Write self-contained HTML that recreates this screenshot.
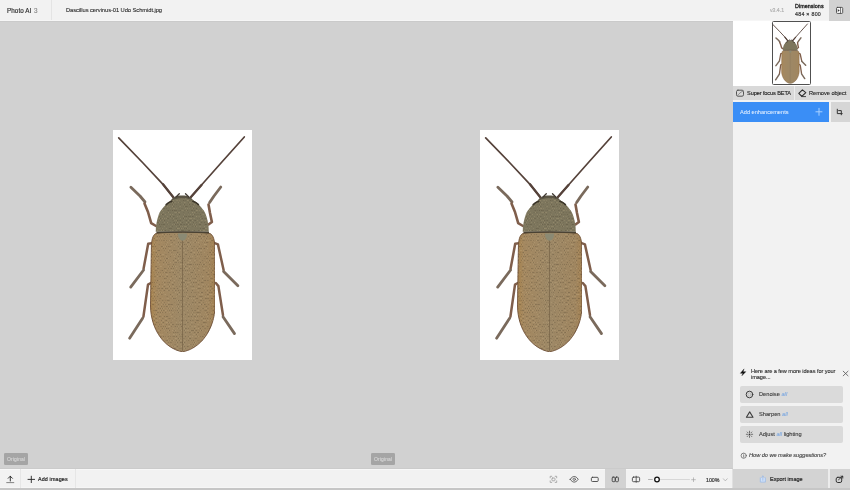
<!DOCTYPE html>
<html><head><meta charset="utf-8">
<style>
*{margin:0;padding:0;box-sizing:border-box}
html,body{width:850px;height:490px;overflow:hidden;background:#d1d1d1;font-family:"Liberation Sans",sans-serif;color:#222}
.abs{position:absolute}
.t{position:absolute;white-space:nowrap;line-height:1;will-change:transform}
.img{position:absolute;background:#fff;overflow:hidden}
</style></head><body>
<svg width="0" height="0" style="position:absolute"><defs>
<filter id="nof"><feOffset dx="0" dy="0"/></filter>
<filter id="spk" x="0" y="0" width="100%" height="100%" color-interpolation-filters="sRGB">
 <feTurbulence type="fractalNoise" baseFrequency="1.0 0.5" numOctaves="2" seed="7" result="n"/>
 <feColorMatrix in="n" type="matrix" values="0 0 0 0 0.28  0 0 0 0 0.24  0 0 0 0 0.17  1.6 0 0 0 -0.85" result="dark"/>
 <feColorMatrix in="n" type="matrix" values="0 0 0 0 0.80  0 0 0 0 0.72  0 0 0 0 0.56  -1.6 0 0 0 0.7" result="light"/>
 <feComposite in="dark" in2="SourceGraphic" operator="in" result="d2"/>
 <feComposite in="light" in2="SourceGraphic" operator="in" result="l2"/>
 <feMerge><feMergeNode in="SourceGraphic"/><feMergeNode in="d2"/><feMergeNode in="l2"/></feMerge>
</filter>
<linearGradient id="ely" x1="0" y1="0" x2="1" y2="0">
 <stop offset="0" stop-color="#a8844f"/>
 <stop offset="0.1" stop-color="#a48860"/>
 <stop offset="0.5" stop-color="#9d8866"/>
 <stop offset="0.9" stop-color="#a08660"/>
 <stop offset="1" stop-color="#a38152"/>
</linearGradient>
<g id="beetle">
 <g fill="none" stroke-linecap="round" stroke-linejoin="round">
  <path d="M5.7 7.9 L30 33 L50 54.3 L60.5 67.5" stroke="#55423a" stroke-width="1.70"/>
  <path d="M50 54.3 L60.5 67.5" stroke="#55423a" stroke-width="2.30"/>
  <path d="M131.3 7 L108 33 L88.5 55 L77.5 67.5" stroke="#55423a" stroke-width="1.70"/>
  <path d="M88.5 55 L77.5 67.5" stroke="#55423a" stroke-width="2.30"/>
  <path d="M17.9 57.3 L27 66 L32 72" stroke="#7a6a5c" stroke-width="2.80"/>
  <path d="M31.5 73.5 L35 82 L38.2 93.2 L43 96" stroke="#7f5e4b" stroke-width="2.60"/>
  <path d="M107.8 57 L101 66 L96.6 72.5" stroke="#7a6a5c" stroke-width="2.80"/>
  <path d="M95.5 74.5 L97 83 L98.9 92 L95.5 94.5" stroke="#7f5e4b" stroke-width="2.60"/>
  <path d="M40.6 112.9 L35.2 113.8 L30.6 138.6" stroke="#7f5e4b" stroke-width="2.50"/>
  <path d="M30.6 140 L17.7 157.1" stroke="#7a6a5c" stroke-width="2.80"/>
  <path d="M99.1 112.1 L104.9 114.3 L110.6 140" stroke="#7f5e4b" stroke-width="2.50"/>
  <path d="M110.6 141.4 L124.9 155.7" stroke="#7a6a5c" stroke-width="2.80"/>
  <path d="M37.8 153 L35 154.6 L30.4 186.8" stroke="#7f5e4b" stroke-width="2.50"/>
  <path d="M29.6 188.3 L16.6 208.2" stroke="#7a6a5c" stroke-width="2.80"/>
  <path d="M102.8 153 L105.4 156.1 L110 185.2" stroke="#7f5e4b" stroke-width="2.50"/>
  <path d="M110 186.8 L121.5 203.6" stroke="#7a6a5c" stroke-width="2.80"/>
 </g>
 <path d="M57 72 C59 67 63 65.5 69 65.5 C75 65.5 79 67 81 72 Z" fill="#5a5444"/>
 <path d="M63 67 L66.3 63.8 M75.8 67 L72.5 63.8" stroke="#3f3830" stroke-width="1.30" stroke-linecap="round" fill="none"/>
 <path d="M42.70 101.80 C42.82 100.45 42.85 96.67 43.40 93.70 C43.95 90.73 44.87 86.68 46.00 84.00 C47.13 81.32 48.82 79.40 50.20 77.60 C51.58 75.80 52.92 74.42 54.30 73.20 C55.68 71.98 56.97 71.05 58.50 70.30 C60.03 69.55 61.70 69.05 63.50 68.70 C65.30 68.35 67.37 68.20 69.30 68.20 C71.23 68.20 73.30 68.35 75.10 68.70 C76.90 69.05 78.57 69.55 80.10 70.30 C81.63 71.05 82.92 71.98 84.30 73.20 C85.68 74.42 87.02 75.80 88.40 77.60 C89.78 79.40 91.47 81.32 92.60 84.00 C93.73 86.68 94.67 90.73 95.20 93.70 C95.73 96.67 95.70 100.45 95.80 101.80 Z" fill="#7d765d" filter="url(#spk)"/>
 
 <path d="M69.5 102 C58 102 46 102.1 42.6 103.6 C39.6 105.5 38.6 110 38.4 117 L37.5 176 C37.8 199 51 218.5 69.5 221.8 C88 218.5 101.7 199 102 176 L101.8 117 C101.6 110 100.4 105.5 97.2 103.6 C93 102.1 81 102 69.5 102 Z" fill="url(#ely)" stroke="#6e4e34" stroke-width="0.9" filter="url(#spk)"/>
 <path d="M43.5 102.6 C55 101.8 84 101.8 96 102.6" stroke="#4a4233" stroke-width="1.6" fill="none"/>
 <path d="M53.2 74.6 C54.7 73 56.2 72 58.7 71.2 M79.9 71.2 C82.4 72 83.9 73 85.4 74.6" stroke="#3a3428" stroke-width="1.60" fill="none" stroke-linecap="round"/>
 <path d="M69.5 104 L69.5 221" stroke="#6f5a40" stroke-width="0.6"/>
 <path d="M65 103.5 C65 108.5 67.5 110.7 69.5 110.7 C71.5 110.7 74 108.5 74 103.5 Z" fill="#8b8a74"/>
</g>
<g id="beetleT">
 <g fill="none" stroke-linecap="round" stroke-linejoin="round">
  <path d="M5.7 7.9 L30 33 L50 54.3 L60.5 67.5" stroke="#55423a" stroke-width="3.23"/>
  <path d="M50 54.3 L60.5 67.5" stroke="#55423a" stroke-width="4.37"/>
  <path d="M131.3 7 L108 33 L88.5 55 L77.5 67.5" stroke="#55423a" stroke-width="3.23"/>
  <path d="M88.5 55 L77.5 67.5" stroke="#55423a" stroke-width="4.37"/>
  <path d="M17.9 57.3 L27 66 L32 72" stroke="#7a6a5c" stroke-width="5.32"/>
  <path d="M31.5 73.5 L35 82 L38.2 93.2 L43 96" stroke="#7f5e4b" stroke-width="4.94"/>
  <path d="M107.8 57 L101 66 L96.6 72.5" stroke="#7a6a5c" stroke-width="5.32"/>
  <path d="M95.5 74.5 L97 83 L98.9 92 L95.5 94.5" stroke="#7f5e4b" stroke-width="4.94"/>
  <path d="M40.6 112.9 L35.2 113.8 L30.6 138.6" stroke="#7f5e4b" stroke-width="4.75"/>
  <path d="M30.6 140 L17.7 157.1" stroke="#7a6a5c" stroke-width="5.32"/>
  <path d="M99.1 112.1 L104.9 114.3 L110.6 140" stroke="#7f5e4b" stroke-width="4.75"/>
  <path d="M110.6 141.4 L124.9 155.7" stroke="#7a6a5c" stroke-width="5.32"/>
  <path d="M37.8 153 L35 154.6 L30.4 186.8" stroke="#7f5e4b" stroke-width="4.75"/>
  <path d="M29.6 188.3 L16.6 208.2" stroke="#7a6a5c" stroke-width="5.32"/>
  <path d="M102.8 153 L105.4 156.1 L110 185.2" stroke="#7f5e4b" stroke-width="4.75"/>
  <path d="M110 186.8 L121.5 203.6" stroke="#7a6a5c" stroke-width="5.32"/>
 </g>
 <path d="M57 72 C59 67 63 65.5 69 65.5 C75 65.5 79 67 81 72 Z" fill="#5a5444"/>
 <path d="M63 67 L66.3 63.8 M75.8 67 L72.5 63.8" stroke="#3f3830" stroke-width="2.47" stroke-linecap="round" fill="none"/>
 <path d="M42.70 101.80 C42.82 100.45 42.85 96.67 43.40 93.70 C43.95 90.73 44.87 86.68 46.00 84.00 C47.13 81.32 48.82 79.40 50.20 77.60 C51.58 75.80 52.92 74.42 54.30 73.20 C55.68 71.98 56.97 71.05 58.50 70.30 C60.03 69.55 61.70 69.05 63.50 68.70 C65.30 68.35 67.37 68.20 69.30 68.20 C71.23 68.20 73.30 68.35 75.10 68.70 C76.90 69.05 78.57 69.55 80.10 70.30 C81.63 71.05 82.92 71.98 84.30 73.20 C85.68 74.42 87.02 75.80 88.40 77.60 C89.78 79.40 91.47 81.32 92.60 84.00 C93.73 86.68 94.67 90.73 95.20 93.70 C95.73 96.67 95.70 100.45 95.80 101.80 Z" fill="#7d765d" filter="url(#nof)"/>
 
 <path d="M69.5 102 C58 102 46 102.1 42.6 103.6 C39.6 105.5 38.6 110 38.4 117 L37.5 176 C37.8 199 51 218.5 69.5 221.8 C88 218.5 101.7 199 102 176 L101.8 117 C101.6 110 100.4 105.5 97.2 103.6 C93 102.1 81 102 69.5 102 Z" fill="url(#ely)" stroke="#6e4e34" stroke-width="0.9" filter="url(#nof)"/>
 <path d="M43.5 102.6 C55 101.8 84 101.8 96 102.6" stroke="#4a4233" stroke-width="1.6" fill="none"/>
 <path d="M53.2 74.6 C54.7 73 56.2 72 58.7 71.2 M79.9 71.2 C82.4 72 83.9 73 85.4 74.6" stroke="#3a3428" stroke-width="3.04" fill="none" stroke-linecap="round"/>
 <path d="M69.5 104 L69.5 221" stroke="#6f5a40" stroke-width="0.6"/>
 <path d="M65 103.5 C65 108.5 67.5 110.7 69.5 110.7 C71.5 110.7 74 108.5 74 103.5 Z" fill="#8b8a74"/>
</g>
</defs></svg>
<div class="abs" style="left:0px;top:0px;width:850px;height:21px;background:#f2f2f2;"></div>
<div class="abs" style="left:0px;top:20px;width:850px;height:1px;background:#f6f6f6;"></div>
<div class="abs" style="left:51px;top:0px;width:1px;height:20px;background:#e4e4e4;"></div>
<div class="t" style="left:6.70px;top:7.97px;font-size:6.3px;color:#2a2a2a;font-weight:normal;font-style:normal;letter-spacing:0.08px;-webkit-text-stroke:0.18px currentColor;-webkit-text-stroke:0.15px #2a2a2a;">Photo AI</div>
<div class="t" style="left:33.90px;top:7.97px;font-size:6.3px;color:#8c8c8c;font-weight:normal;font-style:normal;letter-spacing:0.0px;-webkit-text-stroke:0.18px currentColor;">3</div>
<div class="t" style="left:65.80px;top:8.39px;font-size:5.8px;color:#2a2a2a;font-weight:normal;font-style:normal;letter-spacing:-0.08px;-webkit-text-stroke:0.1px currentColor;">Dascillus cervinus-01 Udo Schmidt.jpg</div>
<div class="t" style="left:769.60px;top:8.00px;font-size:5.2px;color:#b0b0b0;font-weight:normal;font-style:normal;letter-spacing:-0.02px;-webkit-text-stroke:0.18px currentColor;">v3.4.1</div>
<div class="t" style="left:795.20px;top:3.73px;font-size:5.4px;color:#1e1e1e;font-weight:normal;font-style:normal;letter-spacing:0.05px;-webkit-text-stroke:0.3px currentColor;">Dimensions</div>
<div class="t" style="left:795.20px;top:12.31px;font-size:5.3px;color:#333;font-weight:normal;font-style:normal;letter-spacing:0.26px;-webkit-text-stroke:0.18px currentColor;">484 × 800</div>
<div class="abs" style="left:829px;top:0px;width:21px;height:20.5px;background:#d2d2d2;"></div>
<div class="abs" style="left:0px;top:21px;width:733px;height:448px;background:#d1d1d1;"></div>
<div class="abs" style="left:0px;top:21px;width:733px;height:1px;background:#cacaca;"></div>
<div class="abs" style="left:0px;top:468px;width:733px;height:1px;background:#cbcbcb;"></div>
<div class="img" style="left:113px;top:130px;width:139px;height:230px"><svg width="139" height="230" viewBox="0 0 139 230"><use href="#beetle"/></svg></div>
<div class="img" style="left:480px;top:130px;width:139px;height:230px"><svg width="139" height="230" viewBox="0 0 139 230"><use href="#beetle"/></svg></div>
<div class="abs" style="left:4px;top:453px;width:24px;height:11.5px;background:#a5a5a5;border-radius:1.3px;"></div>
<div class="t" style="left:6.80px;top:456.77px;font-size:5.0px;color:#dedede;font-weight:normal;font-style:normal;letter-spacing:0.12px;-webkit-text-stroke:0.04px currentColor;">Original</div>
<div class="abs" style="left:371px;top:453px;width:24px;height:11.5px;background:#a5a5a5;border-radius:1.3px;"></div>
<div class="t" style="left:373.80px;top:456.77px;font-size:5.0px;color:#dedede;font-weight:normal;font-style:normal;letter-spacing:0.12px;-webkit-text-stroke:0.04px currentColor;">Original</div>
<div class="abs" style="left:733px;top:21px;width:117px;height:448px;background:#f2f2f2;"></div>
<div class="abs" style="left:733px;top:21px;width:117px;height:65px;background:#ffffff;"></div>
<svg class="abs" style="left:771.4px;top:21.6px" width="38.6" height="63.9" viewBox="0 0 139 230"><use href="#beetleT"/></svg>
<div class="abs" style="left:772.3px;top:21px;width:38.8px;height:64.4px;border:1px solid #505050;border-radius:1.5px"></div>
<div class="abs" style="left:733px;top:86px;width:117px;height:13.5px;background:#d9d9d9;"></div>
<div class="abs" style="left:794px;top:86px;width:1px;height:13.5px;background:#ececec;"></div>
<div class="t" style="left:747.00px;top:90.96px;font-size:5.6px;color:#222;font-weight:normal;font-style:normal;letter-spacing:-0.1px;-webkit-text-stroke:0.14px currentColor;">Super focus BETA</div>
<div class="t" style="left:808.80px;top:90.96px;font-size:5.6px;color:#222;font-weight:normal;font-style:normal;letter-spacing:0.0px;-webkit-text-stroke:0.12px currentColor;">Remove object</div>
<div class="abs" style="left:733px;top:102px;width:96px;height:19.5px;background:#3a8ef6;"></div>
<div class="t" style="left:739.60px;top:109.96px;font-size:5.6px;color:#e3efff;font-weight:normal;font-style:normal;letter-spacing:0.02px;-webkit-text-stroke:0.05px currentColor;">Add enhancements</div>
<div class="abs" style="left:831px;top:102px;width:19px;height:19.5px;background:#d6d6d6;"></div>
<div class="t" style="left:750.90px;top:368.76px;font-size:5.6px;color:#262626;font-weight:normal;font-style:normal;letter-spacing:-0.06px;-webkit-text-stroke:0.1px currentColor;">Here are a few more ideas for your</div>
<div class="t" style="left:750.90px;top:375.26px;font-size:5.6px;color:#262626;font-weight:normal;font-style:normal;letter-spacing:-0.06px;-webkit-text-stroke:0.1px currentColor;">image...</div>
<div class="abs" style="left:740px;top:386px;width:103px;height:17.2px;background:#dadada;border-radius:2px;"></div>
<div class="abs" style="left:740px;top:405.8px;width:103px;height:17.2px;background:#dadada;border-radius:2px;"></div>
<div class="abs" style="left:740px;top:425.5px;width:103px;height:17.2px;background:#dadada;border-radius:2px;"></div>
<div class="t" style="left:758.90px;top:392.47px;font-size:5.7px;color:#383838;font-weight:normal;font-style:normal;letter-spacing:0.0px;-webkit-text-stroke:0.1px currentColor;">Denoise <i style="color:#7fa9e0">all</i></div>
<div class="t" style="left:758.90px;top:412.27px;font-size:5.7px;color:#383838;font-weight:normal;font-style:normal;letter-spacing:0.0px;-webkit-text-stroke:0.1px currentColor;">Sharpen <i style="color:#7fa9e0">all</i></div>
<div class="t" style="left:758.90px;top:432.07px;font-size:5.7px;color:#383838;font-weight:normal;font-style:normal;letter-spacing:0.0px;-webkit-text-stroke:0.1px currentColor;">Adjust <i style="color:#7fa9e0">all</i> lighting</div>
<div class="t" style="left:748.80px;top:453.47px;font-size:5.7px;color:#333;font-weight:normal;font-style:italic;letter-spacing:-0.06px;-webkit-text-stroke:0.08px currentColor;">How do we make suggestions?</div>
<div class="abs" style="left:0px;top:469px;width:733px;height:19px;background:#f2f2f2;"></div>
<div class="abs" style="left:0px;top:469px;width:733px;height:1px;background:#f8f8f8;"></div>
<div class="abs" style="left:0px;top:487px;width:733px;height:1px;background:#f6f6f6;"></div>
<div class="abs" style="left:20px;top:469px;width:1px;height:19px;background:#e6e6e6;"></div>
<div class="abs" style="left:75px;top:469px;width:1px;height:19px;background:#e6e6e6;"></div>
<div class="t" style="left:38.10px;top:477.03px;font-size:5.4px;color:#222;font-weight:normal;font-style:normal;letter-spacing:0.13px;-webkit-text-stroke:0.18px currentColor;">Add images</div>
<div class="abs" style="left:605px;top:469px;width:21px;height:19px;background:#d2d2d2;"></div>
<div class="t" style="left:705.90px;top:478.31px;font-size:5.3px;color:#333;font-weight:normal;font-style:normal;letter-spacing:-0.05px;-webkit-text-stroke:0.18px currentColor;">100%</div>
<div class="abs" style="left:732px;top:469px;width:1px;height:19px;background:#e0e0e0;"></div>
<div class="abs" style="left:733px;top:469px;width:95px;height:19px;background:#d3d3d3;"></div>
<div class="abs" style="left:828px;top:469px;width:2px;height:19px;background:#ececec;"></div>
<div class="abs" style="left:830px;top:469px;width:20px;height:19px;background:#d3d3d3;"></div>
<div class="t" style="left:769.90px;top:477.14px;font-size:5.5px;color:#222;font-weight:normal;font-style:normal;letter-spacing:0.02px;-webkit-text-stroke:0.18px currentColor;">Export image</div>
<div class="abs" style="left:0px;top:488px;width:850px;height:2px;background:#c6c6c6;"></div>

<svg class="abs" style="left:0;top:0" width="850" height="490" viewBox="0 0 850 490">
<g fill="none" stroke-linecap="round" stroke-linejoin="round">
 <!-- panel toggle -->
 <rect x="836.5" y="7.4" width="6.2" height="6" rx="0.9" fill="#fff" stroke="#454545" stroke-width="0.9"/>
 <line x1="840.6" y1="7.6" x2="840.6" y2="13.2" stroke="#454545" stroke-width="0.8"/>
 <path d="M838 9.4 L839.5 10.45 L838 11.5 Z" fill="#333" stroke="#333" stroke-width="0.3"/>
 <!-- super focus -->
 <rect x="736.5" y="90.2" width="7" height="6" rx="1.4" stroke="#555" stroke-width="1"/>
 <path d="M737.5 95.5 C739 93.5 741 92 743 91" stroke="#888" stroke-width="1"/>
 <!-- eraser -->
 <path d="M798.8 93.3 L802.4 89.8 L805.8 92.6 L801.8 96.4 Z" stroke="#2a2a2a" stroke-width="1.1"/>
 <path d="M801.8 96.6 L805.6 96.6" stroke="#333" stroke-width="0.9"/>
 <!-- plus in blue -->
 <path d="M819 108.3 V115.3 M815.9 111.8 H822" stroke="#a8d0ff" stroke-width="1"/>
 <!-- crop -->
 <path d="M837.3 109.2 V113.6 H842.2 M838.6 110.6 H841.3 V114.8" stroke="#333" stroke-width="1"/>
 <!-- lightning -->
 <path d="M743.8 369.2 L740.4 373.3 L742.9 373.3 L741.9 375.7 L745.8 371.7 L743.2 371.7 Z" fill="#111" stroke="#111" stroke-width="0.4"/>
 <!-- close -->
 <path d="M843.2 371.2 L848 375.8 M848 371.2 L843.2 375.8" stroke="#555" stroke-width="0.8"/>
 <!-- denoise circle -->
 <circle cx="749.5" cy="394.5" r="3.3" stroke="#3a3a3a" stroke-width="1"/>
 <circle cx="749.5" cy="394.5" r="1.6" stroke="#aaa" stroke-width="0.6"/>
 <!-- triangle -->
 <path d="M749.7 411.9 L753 417.2 L746.4 417.2 Z" stroke="#3a3a3a" stroke-width="1.05"/>
 <!-- sun -->
 <g stroke="#555" stroke-width="0.8">
  <path d="M749.5 431.2 V432.6 M749.5 436 V437.4 M746.3 434.3 H747.7 M751.3 434.3 H752.7 M747.2 432 L748 432.8 M751.8 432 L751 432.8 M747.2 436.6 L748 435.8 M751.8 436.6 L751 435.8"/>
 </g>
 <circle cx="749.5" cy="434.3" r="0.9" fill="#333"/>
 <!-- info -->
 <circle cx="743.7" cy="455.7" r="2.6" stroke="#555" stroke-width="0.7"/>
 <path d="M743.7 455 V457.2" stroke="#555" stroke-width="0.7"/>
 <circle cx="743.7" cy="453.9" r="0.35" fill="#555"/>
 <!-- upload -->
 <path d="M10.3 481 V476.3 M8.2 478.3 L10.3 476.2 L12.4 478.3" stroke="#222" stroke-width="0.9"/>
 <path d="M6.7 482.6 H13.8" stroke="#555" stroke-width="0.7"/>
 <!-- plus -->
 <path d="M31.3 476.2 V482.6 M28 479.4 H34.6" stroke="#222" stroke-width="0.9"/>
 <!-- focus frame -->
 <g stroke="#9a9a9a" stroke-width="0.8">
  <path d="M550.2 477.8 V476.3 H551.7 M555.2 476.3 H556.7 V477.8 M556.7 480.9 V482.4 H555.2 M551.7 482.4 H550.2 V480.9"/>
  <rect x="551.9" y="478" width="3.1" height="2.8" rx="0.8"/>
 </g>
 <!-- eye -->
 <path d="M570.2 479.3 C571.5 477.3 573 476.5 574.2 476.5 C575.4 476.5 576.9 477.3 578.2 479.3 C576.9 481.3 575.4 482.1 574.2 482.1 C573 482.1 571.5 481.3 570.2 479.3 Z" stroke="#555" stroke-width="0.9"/>
 <circle cx="574.2" cy="479.3" r="1.2" stroke="#555" stroke-width="0.8"/>
 <!-- single rect -->
 <rect x="591.4" y="477.3" width="6.8" height="4.2" rx="1" stroke="#444" stroke-width="0.9"/>
 <!-- double rect -->
 <rect x="612.2" y="477.1" width="2.9" height="4.6" rx="0.9" stroke="#444" stroke-width="0.9"/>
 <rect x="615.5" y="477.1" width="2.9" height="4.6" rx="0.9" stroke="#444" stroke-width="0.9"/>
 <!-- split -->
 <rect x="632.4" y="477.1" width="7.2" height="4.6" rx="1.1" stroke="#444" stroke-width="0.9"/>
 <path d="M636.2 476.2 V482.3" stroke="#444" stroke-width="0.8"/>
 <!-- slider -->
 <path d="M648.5 479.5 H652.3" stroke="#888" stroke-width="0.6"/>
 <path d="M660 479.5 H689.5" stroke="#c4c4c4" stroke-width="0.6"/>
 <circle cx="657" cy="479.5" r="2.3" fill="#fff" stroke="#111" stroke-width="1.3"/>
 <path d="M693.5 477.8 V481.6 M691.6 479.7 H695.4" stroke="#999" stroke-width="0.6"/>
 <!-- chevron -->
 <path d="M723.4 478.8 L725.3 480.9 L727.2 478.8" stroke="#999" stroke-width="0.6"/>
 <!-- export share -->
 <path d="M760.3 477.8 V482.1 H765.4 V477.8" fill="#cfe0f8" stroke="#9dbbe6" stroke-width="0.8"/>
 <path d="M762.85 480.3 V476 M761.6 477.2 L762.85 476 L764.1 477.2" stroke="#9dbbe6" stroke-width="0.8"/>
 <!-- export 2 -->
 <rect x="836.2" y="477.3" width="5.5" height="5.2" rx="1.6" stroke="#333" stroke-width="1"/>
 <path d="M838.5 479.8 L842.5 476.3" stroke="#333" stroke-width="0.9"/>
 <path d="M841 476.1 H843 V478.1 Z" fill="#333" stroke="#333" stroke-width="0.5"/>
</g>

</svg>
</body></html>
